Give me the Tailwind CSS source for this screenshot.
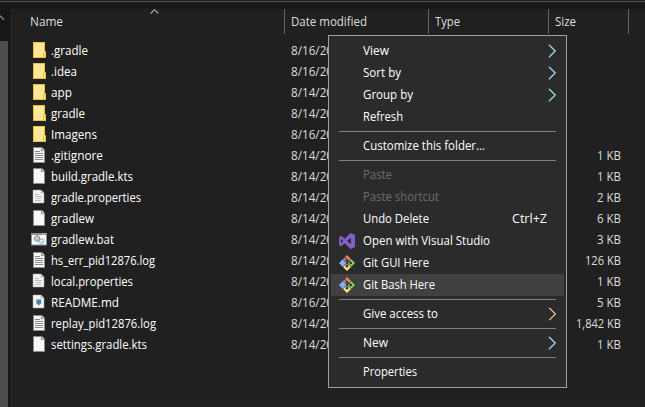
<!DOCTYPE html>
<html lang="en">
<head>
<meta charset="utf-8">
<title>File Explorer</title>
<script src="https://cdn.jsdelivr.net/npm/@tailwindcss/browser@4"></script>
</head>
<body class="h-[407px] w-[645px] overflow-hidden bg-[#202020] font-['Open_Sans','Noto_Sans',sans-serif] text-[12px] leading-4 text-white">
<svg class="hidden">
  <symbol id="folder" viewBox="0 0 16 16"><path d="M2 0h12v9l1 0v7H2z" fill="#e9bf3c"/><path d="M3 1h10v8l-1 2v4H3z" fill="#ffe796"/><path d="M13 10h1v5h-1z" fill="#ffe48a"/></symbol>
  <symbol id="lines" viewBox="0 0 16 16"><path d="M2 0h9l3 3v13H2z" fill="#8c8c8c"/><path d="M3 1h7v3h3v11H3z" fill="#f6f6f6"/><path d="M11 1v2h2z" fill="#f6f6f6"/><path d="M4 4.500h5M4 6.500h8M4 8.500h8M4 10.500h8M4 12.500h8" stroke="#8a8a8a"/></symbol>
  <symbol id="blank" viewBox="0 0 16 16"><path d="M2 0h9l3 3v13H2z" fill="#8c8c8c"/><path d="M3 1h7v3h3v11H3z" fill="#f8f8f8"/><path d="M11 1v2h2z" fill="#f8f8f8"/></symbol>
  <symbol id="prop" viewBox="0 0 16 16"><path d="M2 1h8l3 3v10H2z" fill="#f2f2f2" stroke="#aaa" stroke-width=".5"/><path d="M10 1v3h3" fill="#ccc" stroke="#aaa" stroke-width=".6"/><path d="M4 5.500h4M4 7.500h7M5 9.500h5M4 11.500h6" stroke="#b5b5b5" stroke-width=".9"/></symbol>
  <symbol id="bat" viewBox="0 0 16 16"><path d="M0 2h16v12.500H0z" fill="#8d9195"/><path d="M1 4h14v9.500H1z" fill="#f5f7f8"/><path d="M11 3h1M13 3h1" stroke="#eee" stroke-width=".8"/><circle cx="6" cy="7.500" r="2.600" fill="#ddd" stroke="#777" stroke-width="1.300" stroke-dasharray="1 .5"/><circle cx="6" cy="7.500" r="1" fill="#fff" stroke="#888" stroke-width=".5"/><circle cx="10.500" cy="10" r="2.200" fill="#c6e7f5" stroke="#71add0" stroke-width="1.200" stroke-dasharray="1 .5"/><circle cx="10.500" cy="10" r=".8" fill="#fff"/></symbol>
  <symbol id="md" viewBox="0 0 16 16"><path d="M2 1h8l3 3v10H2z" fill="#f5f5f5" stroke="#aaa" stroke-width=".5"/><path d="M10 1v3h3" fill="#ccc" stroke="#aaa" stroke-width=".6"/><path d="M5.500 5l1.200.7L7.700 5l1 .7L10 5v3.500h1L7.700 11.500 4.500 8.500h1z" fill="#418aaa"/></symbol>
  <symbol id="vs" viewBox="0 0 16 16"><path fill-rule="evenodd" d="M11.500 0L16 2v12l-4.500 2-5.700-5.700L2 13.200.200 12.300V3.700L2 2.800l3.800 2.900zM12 4.800L8 8l4 3.200zM2 5.700v4.600L4.300 8z" fill="#865fc5"/></symbol>
  <symbol id="git" viewBox="0 0 16 16"><path d="M8 0l4 4-4 3.500L4 4z" fill="#f47c7c"/><path d="M3.700 4.300L7.400 8l-3.700 3.700L0 8z" fill="#80b3ff"/><path d="M12.300 4.300L16 8l-3.700 3.700L8.600 8z" fill="#80d45b"/><path d="M8 8.600l4 3.400-4 4-4-4z" fill="#ffe680"/><path d="M5.500 2l2.500 3v6M8 5l3.500 3" fill="none" stroke="#333" stroke-width="1.100"/><circle cx="8" cy="5" r="1.100" fill="#333"/><circle cx="8" cy="11.300" r="1.300" fill="#333"/><circle cx="11.800" cy="8" r="1.300" fill="#333"/></symbol>
  <symbol id="chev" viewBox="0 0 8 14"><path d="M.8 .8L7 7 .8 13.200" fill="none" stroke="#5bb8f0" stroke-width="1.200"/><path d="M1.300 .8L7.500 7l-6.200 6.200" fill="none" stroke="#e9efd8" stroke-width=".9"/></symbol>
  <symbol id="chevwarm" viewBox="0 0 8 14"><path d="M.8 .8L7 7 .8 13.200" fill="none" stroke="#6fb5e0" stroke-width="1"/><path d="M1.300 .8L7.500 7l-6.200 6.200" fill="none" stroke="#f5bd82" stroke-width="1.100"/></symbol>
</svg>

<div class="flex h-[407px] flex-col">
  <div class="h-[9px] shrink-0 bg-[#191919] pt-px"><div class="h-px bg-[#555]"></div></div>
  <div class="flex min-h-0 grow">
    <div class="flex w-[11px] shrink-0 flex-col bg-[#171717]">
      <svg class="mt-[6px] h-[6px] w-[5px]" viewBox="0 0 5 6"><path d="M0 .8l4 4" stroke="#858585" stroke-width="1.500"/></svg>
      <div class="mt-5 w-2 grow bg-[#4d4d4d]"></div>
    </div>
    <div class="w-px shrink-0 bg-[#2b2b2b]"></div>
    <div class="grow">
      <div class="flex h-[25px] text-[#dedede]">
        <div class="relative w-[273px] border-r border-[#636363] pt-[5px] pl-[18px]"><span data-w="32">Name</span><svg class="absolute top-0 left-[138px] h-[5px] w-[9px]" viewBox="0 0 9 5"><path d="M.7 4.500l3.800-3.800 3.800 3.800" fill="none" stroke="#aaa" stroke-width="1.100"/></svg></div>
        <div class="w-36 border-r border-[#636363] pt-[5px] pl-[6px]"><span data-w="75">Date modified</span></div>
        <div class="w-[120px] border-r border-[#636363] pt-[5px] pl-[6px]"><span data-w="24">Type</span></div>
        <div class="w-20 border-r border-[#636363] pt-[5px] pl-[6px]"><span data-w="20">Size</span></div>
      </div>
      <div id="files" class="pt-[6px]"></div>
    </div>
  </div>
</div>

<div id="menu" class="absolute top-[35px] left-[328px] h-[353px] w-[239px] border border-[#a0a0a0] bg-[#2b2b2b] px-[2px] py-1"></div>

<script>
const files = [
  ['folder', '.gradle', 36, 16], ['folder', '.idea', 25, 16], ['folder', 'app', 20, 14],
  ['folder', 'gradle', 33, 14], ['folder', 'Imagens', 45, 16],
  ['lines', '.gitignore', 51, 14, '1 KB', 23], ['blank', 'build.gradle.kts', 81, 14, '1 KB', 23],
  ['prop', 'gradle.properties', 89, 14, '2 KB', 23], ['blank', 'gradlew', 42, 14, '6 KB', 23],
  ['bat', 'gradlew.bat', 62, 14, '3 KB', 23], ['lines', 'hs_err_pid12876.log', 103, 14, '126 KB', 35],
  ['prop', 'local.properties', 81, 14, '1 KB', 23], ['md', 'README.md', 67, 16, '5 KB', 23],
  ['lines', 'replay_pid12876.log', 104, 14, '1,842 KB', 44], ['blank', 'settings.gradle.kts', 95, 14, '1 KB', 23]
];
document.getElementById('files').innerHTML = files.map(([icon, name, w, day, size, sw]) => `
  <div class="flex h-[21px] items-center pl-[19px]">
    <svg class="mr-1 mb-px h-4 w-4 shrink-0"><use href="#${icon}"/></svg>
    <div class="w-60 shrink-0"><span data-w="${w}">${name}</span></div>
    <div class="w-[49px] shrink-0 overflow-hidden whitespace-nowrap text-[#dedede]"><span data-w="41">8/${day}/20</span></div>
    <div class="flex w-[281px] shrink-0 justify-end text-[#dedede]">${size ? `<span data-w="${sw}">${size}</span>` : ''}</div>
  </div>`).join('');

const menu = [
  { t: 'View', w: 25, sub: 'chev' }, { t: 'Sort by', w: 37, sub: 'chev' }, { t: 'Group by', w: 49, sub: 'chev' }, { t: 'Refresh', w: 39 }, null,
  { t: 'Customize this folder...', w: 121 }, null,
  { t: 'Paste', w: 28, off: true }, { t: 'Paste shortcut', w: 75, off: true },
  { t: 'Undo Delete', w: 65, key: 'Ctrl+Z' }, { t: 'Open with Visual Studio', w: 126, icon: 'vs' },
  { t: 'Git GUI Here', w: 65, icon: 'git' }, { t: 'Git Bash Here', w: 71, icon: 'git', on: true }, null,
  { t: 'Give access to', w: 74, sub: 'chevwarm' }, null, { t: 'New', w: 24, sub: 'chev' }, null, { t: 'Properties', w: 53 }
];
document.getElementById('menu').innerHTML = menu.map(m => m ? `
  <div class="flex h-[22px] items-center pl-2 pr-2 ${m.on ? 'bg-[#414141]' : ''} ${m.off ? 'text-[#6d6d6d]' : 'text-white'}">
    <div class="mr-2 h-4 w-4">${m.icon ? `<svg class="h-4 w-4"><use href="#${m.icon}"/></svg>` : ''}</div>
    <span data-w="${m.w}">${m.t}</span>
    <span class="grow"></span>
    ${m.key ? `<span class="mr-[9px]"><span data-w="34">${m.key}</span></span>` : ''}
    ${m.sub ? `<svg class="h-[14px] w-2"><use href="#${m.sub}"/></svg>` : ''}
  </div>` : '<div class="h-[7px] px-2 pt-[3px]"><div class="h-px bg-[#808080]"></div></div>').join('');

// Fit each label to its measure, in the font named here so it does not depend on stylesheet timing.
document.querySelectorAll('[data-w]').forEach(el => {
  Object.assign(el.style, {
    display: 'inline-block', whiteSpace: 'nowrap', transformOrigin: '0 50%',
    fontFamily: '"Open Sans", "Noto Sans", sans-serif', fontSize: '12px', lineHeight: '16px'
  });
  const range = document.createRange();
  range.selectNodeContents(el);
  const natural = range.getBoundingClientRect().width;
  const width = +el.dataset.w + 1;
  el.style.width = width + 'px';
  el.style.transform = `scaleX(${width / natural})`;
});
</script>
</body>
</html>
